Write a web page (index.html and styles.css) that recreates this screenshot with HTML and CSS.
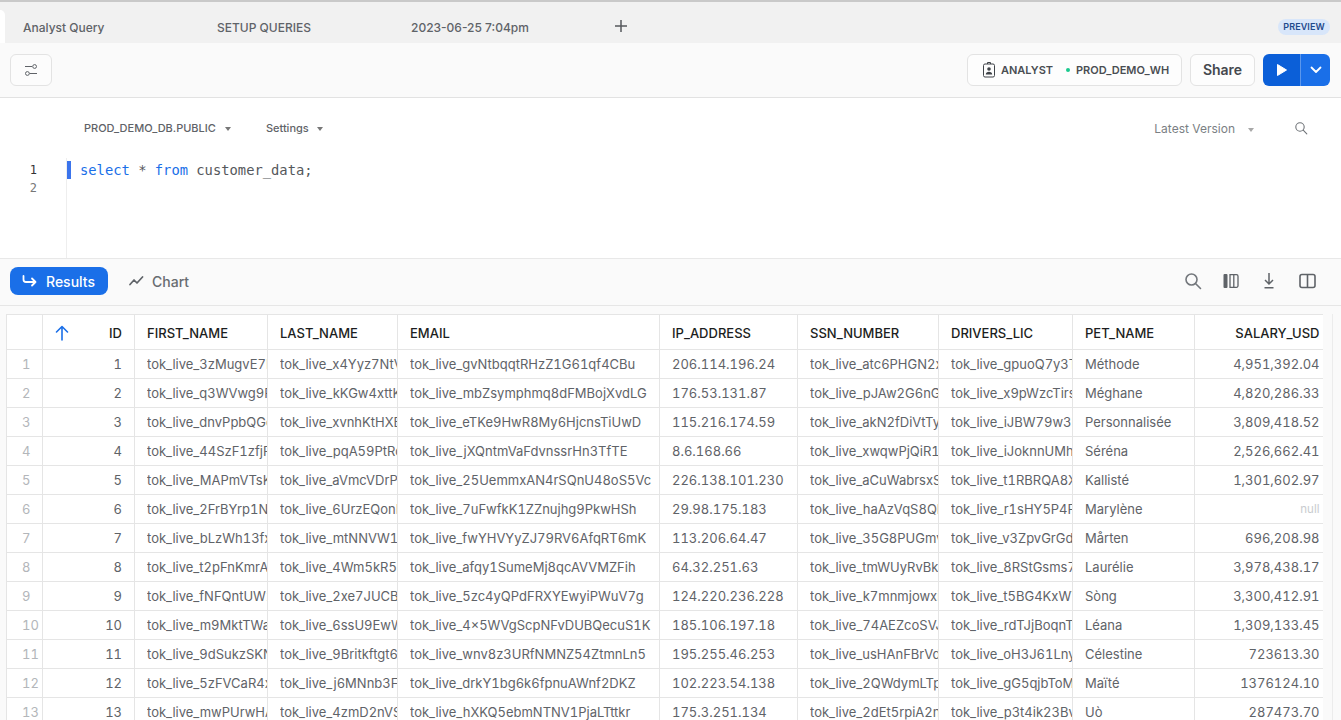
FILE: index.html
```html
<!DOCTYPE html>
<html lang="en">
<head>
<meta charset="utf-8">
<title>Analyst Query</title>
<link rel="stylesheet" href="styles.css">
</head>
<body>
<div class="tabs">
  <div class="active-tab"></div>
  <div class="tab tab-query">Analyst Query</div>
  <div class="tab tab-setup">SETUP QUERIES</div>
  <div class="tab tab-date">2023-06-25 7:04pm</div>
  <svg class="plus" width="14" height="14" viewBox="0 0 14 14"><path d="M7 1v12M1 7h12" stroke="#55585c" stroke-width="1.5" fill="none"/></svg>
  <span class="preview">PREVIEW</span>
</div>
<div class="toolbar">
  <button class="filter-btn"><svg width="12" height="12" viewBox="0 0 12 12" fill="none" stroke="#5f6368" stroke-width="1"><path d="M0 2.500h7M4.500 9.500h7.500"/><circle cx="9.600" cy="2.500" r="1.900"/><circle cx="2.400" cy="9.500" r="1.900"/></svg></button>
  <div class="spacer"></div>
  <div class="context">
    <svg width="14" height="18" viewBox="0 0 14 18" fill="none"><rect x="1.500" y="3" width="11" height="13" rx="1.500" stroke="#3f4348" stroke-width="1"/><path d="M5.500 3V1.500h3V3" stroke="#3f4348"/><circle cx="7" cy="8" r="1.800" fill="#3f4348"/><path d="M3.800 13.500c0-2 1.400-2.800 3.200-2.800s3.200.8 3.200 2.800z" fill="#3f4348"/></svg>
    <span class="role">ANALYST</span>
    <span class="dot"></span>
    <span>PROD_DEMO_WH</span>
  </div>
  <button class="share">Share</button>
  <div class="run">
    <span class="run-main"><svg width="12" height="14" viewBox="0 0 12 14"><path d="M1.500 1.500v11l9-5.500z" fill="#fff" stroke="#fff" stroke-linejoin="round"/></svg></span>
    <span class="run-more"><svg width="12" height="8" viewBox="0 0 12 8"><path d="M1.500 1.500L6 6l4.500-4.500" stroke="#fff" stroke-width="1.800" fill="none" stroke-linecap="round" stroke-linejoin="round"/></svg></span>
  </div>
</div>
<div class="editor">
  <div class="editor-bar">
    <span class="ctx-db">PROD_DEMO_DB.PUBLIC<i class="caret"></i></span>
    <span class="ctx-settings">Settings<i class="caret"></i></span>
    <span class="spacer"></span>
    <span class="version">Latest Version<i class="caret caret-light"></i></span>
    <svg class="editor-search" width="14" height="14" viewBox="0 0 14 14" fill="none" stroke="#6f7378" stroke-width="1.100"><circle cx="6" cy="6" r="4.200"/><path d="M9.200 9.200l3.600 3.600" stroke-linecap="round"/></svg>
  </div>
  <div class="code">
    <div class="gutter"><div class="ln ln-on">1</div><div class="ln">2</div></div>
    <div class="code-body">
      <div class="code-line"><i class="cursor"></i><span class="kw">select</span> * <span class="kw">from</span> customer_data;</div>
    </div>
  </div>
</div>
<div class="results-bar">
  <button class="results-btn"><svg width="16" height="12" viewBox="0 0 16 12" fill="none" stroke="#fff" stroke-width="1.800" stroke-linecap="round" stroke-linejoin="round"><path d="M1.500 1v3.500c0 1.500 1 2.500 2.500 2.500h9.500M10 3.500L13.500 7 10 10.500"/></svg>Results</button>
  <button class="chart-btn"><svg width="15" height="10" viewBox="0 0 15 10" fill="none" stroke="#5f6368" stroke-width="1.700" stroke-linecap="round" stroke-linejoin="round"><path d="M1 8.500l4-4.500 3 3 5.500-6"/></svg>Chart</button>
  <div class="spacer"></div>
  <div class="result-icons">
    <span class="icon-slot"><svg width="18" height="18" viewBox="0 0 18 18" fill="none" stroke="#73777c" stroke-width="1.600"><circle cx="7.500" cy="7.500" r="5.500"/><path d="M11.500 11.500l5 5" stroke-linecap="round"/></svg></span>
    <span class="icon-slot"><svg width="16" height="16" viewBox="0 0 16 16" fill="none" stroke="#5f6368" stroke-width="1.300"><rect x=".5" y="1" width="4" height="14" fill="#5f6368" stroke="none" rx="1"/><path d="M7 1.650h6.500a1.500 1.500 0 0 1 1.500 1.500v9.700a1.500 1.500 0 0 1-1.500 1.500H7zM10.800 1.650v12.700"/></svg></span>
    <span class="icon-slot"><svg width="14" height="18" viewBox="0 0 14 18" fill="none" stroke="#5f6368" stroke-width="1.500"><path d="M7 1v10M3 8l4 4 4-4M2.500 15.800h9"/></svg></span>
    <span class="icon-slot"><svg width="17" height="16" viewBox="0 0 17 16" fill="none" stroke="#5f6368" stroke-width="1.600"><rect x="1" y="1.500" width="15" height="13" rx="2"/><path d="M8.500 1.500v13"/></svg></span>
  </div>
</div>
<div class="grid-wrap">
<table class="grid">
<colgroup><col class="c-rn"><col class="c-id"><col class="c-fn"><col class="c-ln"><col class="c-em"><col class="c-ip"><col class="c-ssn"><col class="c-dl"><col class="c-pet"><col class="c-sal"></colgroup>
<thead><tr>
<th class="rn"></th>
<th class="num id-head"><svg class="sort" width="14" height="16" viewBox="0 0 14 16" fill="none" stroke="#1a6fe8" stroke-width="1.600" stroke-linecap="round" stroke-linejoin="round"><path d="M7 15V1.500M1.500 7L7 1.500 12.500 7"/></svg>ID</th>
<th>FIRST_NAME</th><th>LAST_NAME</th><th>EMAIL</th><th>IP_ADDRESS</th><th>SSN_NUMBER</th><th>DRIVERS_LIC</th><th>PET_NAME</th><th class="num">SALARY_USD</th>
</tr></thead>
<tbody>
<tr><td class="rn">1</td><td class="num">1</td><td><div>tok_live_3zMugvE7I</div></td><td><div>tok_live_x4Yyz7NtV</div></td><td><div>tok_live_gvNtbqqtRHzZ1G61qf4CBu</div></td><td><div>206.114.196.24</div></td><td><div>tok_live_atc6PHGN2x</div></td><td><div>tok_live_gpuoQ7y3T</div></td><td><div>Méthode</div></td><td class="num">4,951,392.04</td></tr>
<tr><td class="rn">2</td><td class="num">2</td><td><div>tok_live_q3WVwg9F</div></td><td><div>tok_live_kKGw4xttK</div></td><td><div>tok_live_mbZsymphmq8dFMBojXvdLG</div></td><td><div>176.53.131.87</div></td><td><div>tok_live_pJAw2G6nG</div></td><td><div>tok_live_x9pWzcTirs</div></td><td><div>Méghane</div></td><td class="num">4,820,286.33</td></tr>
<tr><td class="rn">3</td><td class="num">3</td><td><div>tok_live_dnvPpbQGc</div></td><td><div>tok_live_xvnhKtHXE</div></td><td><div>tok_live_eTKe9HwR8My6HjcnsTiUwD</div></td><td><div>115.216.174.59</div></td><td><div>tok_live_akN2fDiVtTy</div></td><td><div>tok_live_iJBW79w3I</div></td><td><div>Personnalisée</div></td><td class="num">3,809,418.52</td></tr>
<tr><td class="rn">4</td><td class="num">4</td><td><div>tok_live_44SzF1zfjF</div></td><td><div>tok_live_pqA59PtRc</div></td><td><div>tok_live_jXQntmVaFdvnssrHn3TfTE</div></td><td><div>8.6.168.66</div></td><td><div>tok_live_xwqwPjQiR1</div></td><td><div>tok_live_iJoknnUMh</div></td><td><div>Séréna</div></td><td class="num">2,526,662.41</td></tr>
<tr><td class="rn">5</td><td class="num">5</td><td><div>tok_live_MAPmVTsK</div></td><td><div>tok_live_aVmcVDrP</div></td><td><div>tok_live_25UemmxAN4rSQnU48oS5Vc</div></td><td><div>226.138.101.230</div></td><td><div>tok_live_aCuWabrsxS</div></td><td><div>tok_live_t1RBRQA8X</div></td><td><div>Kallisté</div></td><td class="num">1,301,602.97</td></tr>
<tr><td class="rn">6</td><td class="num">6</td><td><div>tok_live_2FrBYrp1N</div></td><td><div>tok_live_6UrzEQonI</div></td><td><div>tok_live_7uFwfkK1ZZnujhg9PkwHSh</div></td><td><div>29.98.175.183</div></td><td><div>tok_live_haAzVqS8QI</div></td><td><div>tok_live_r1sHY5P4F</div></td><td><div>Marylène</div></td><td class="num null">null</td></tr>
<tr><td class="rn">7</td><td class="num">7</td><td><div>tok_live_bLzWh13fx</div></td><td><div>tok_live_mtNNVW1</div></td><td><div>tok_live_fwYHVYyZJ79RV6AfqRT6mK</div></td><td><div>113.206.64.47</div></td><td><div>tok_live_35G8PUGmv</div></td><td><div>tok_live_v3ZpvGrGd</div></td><td><div>Mårten</div></td><td class="num">696,208.98</td></tr>
<tr><td class="rn">8</td><td class="num">8</td><td><div>tok_live_t2pFnKmrA</div></td><td><div>tok_live_4Wm5kR5z</div></td><td><div>tok_live_afqy1SumeMj8qcAVVMZFih</div></td><td><div>64.32.251.63</div></td><td><div>tok_live_tmWUyRvBk</div></td><td><div>tok_live_8RStGsms7</div></td><td><div>Laurélie</div></td><td class="num">3,978,438.17</td></tr>
<tr><td class="rn">9</td><td class="num">9</td><td><div>tok_live_fNFQntUW2</div></td><td><div>tok_live_2xe7JUCB</div></td><td><div>tok_live_5zc4yQPdFRXYEwyiPWuV7g</div></td><td><div>124.220.236.228</div></td><td><div>tok_live_k7mnmjowxi</div></td><td><div>tok_live_t5BG4KxWY</div></td><td><div>Sòng</div></td><td class="num">3,300,412.91</td></tr>
<tr><td class="rn">10</td><td class="num">10</td><td><div>tok_live_m9MktTWa</div></td><td><div>tok_live_6ssU9EwW</div></td><td><div>tok_live_4×5WVgScpNFvDUBQecuS1K</div></td><td><div>185.106.197.18</div></td><td><div>tok_live_74AEZcoSVJ</div></td><td><div>tok_live_rdTJjBoqnT</div></td><td><div>Léana</div></td><td class="num">1,309,133.45</td></tr>
<tr><td class="rn">11</td><td class="num">11</td><td><div>tok_live_9dSukzSKN</div></td><td><div>tok_live_9Britkftgt6</div></td><td><div>tok_live_wnv8z3URfNMNZ54ZtmnLn5</div></td><td><div>195.255.46.253</div></td><td><div>tok_live_usHAnFBrVd</div></td><td><div>tok_live_oH3J61Lny</div></td><td><div>Célestine</div></td><td class="num">723613.30</td></tr>
<tr><td class="rn">12</td><td class="num">12</td><td><div>tok_live_5zFVCaR4x</div></td><td><div>tok_live_j6MNnb3F</div></td><td><div>tok_live_drkY1bg6k6fpnuAWnf2DKZ</div></td><td><div>102.223.54.138</div></td><td><div>tok_live_2QWdymLTp</div></td><td><div>tok_live_gG5qjbToM</div></td><td><div>Maïté</div></td><td class="num">1376124.10</td></tr>
<tr><td class="rn">13</td><td class="num">13</td><td><div>tok_live_mwPUrwHA</div></td><td><div>tok_live_4zmD2nVS</div></td><td><div>tok_live_hXKQ5ebmNTNV1PjaLTttkr</div></td><td><div>175.3.251.134</div></td><td><div>tok_live_2dEt5rpiA2n</div></td><td><div>tok_live_p3t4ik23Bv</div></td><td><div>Uò</div></td><td class="num">287473.70</td></tr>
</tbody>
</table>
<div class="scroll-track"></div>
</div>
</body>
</html>
```
FILE: styles.css
```css
* { box-sizing: border-box; }
html, body { margin: 0; height: 720px; overflow: hidden; }
body { font-family: Inter, "Noto Sans", sans-serif; background: #fff; color: #5a5e63; display: flex; flex-direction: column; }
button { font-family: inherit; cursor: pointer; }
.spacer { flex: 1; }

.tabs { position: relative; height: 43px; flex: none; background: #f1f1f1; border-top: 2px solid #c9c9c9; font-size: 12px; color: #5f6368; display: flex; align-items: center; }
.active-tab { width: 5px; height: 33px; background: #fff; border-top-right-radius: 6px; flex: none; align-self: flex-end; }
.tab { font-weight: 500; flex: none; margin-top: 9px; }
.tab-query { width: 194px; margin-left: 18px; }
.tab-setup { width: 194px; }
.tab-date { width: 204px; }
.plus { flex: none; margin-top: 7px; margin-left: -1px; }
.preview { position: absolute; right: 11px; top: 17px; width: 52px; height: 16px; line-height: 16px; text-align: center; border-radius: 8px; background: #d8e6fa; color: #1f4a8c; font-size: 9px; font-weight: 600; letter-spacing: .1px; }

.toolbar { height: 55px; flex: none; background: #fafafa; border-bottom: 1px solid #e2e2e2; display: flex; align-items: center; padding: 0 11px 1px 10px; }
.filter-btn { width: 42px; height: 32px; border: 1px solid #e3e3e3; background: #fcfcfc; border-radius: 6px; display: flex; align-items: center; justify-content: center; padding: 0; }
.context { height: 32px; width: 215px; margin-right: 8px; border: 1px solid #e3e3e3; border-radius: 6px; background: #fdfdfd; display: flex; align-items: center; padding-left: 14px; font-size: 11px; font-weight: 600; color: #4a4d52; }
.role { margin-left: 5px; width: 65px; }
.dot { width: 4px; height: 4px; border-radius: 50%; background: #1bc98e; margin-right: 6px; flex: none; }
.share { width: 65px; height: 32px; margin-right: 8px; border: 1px solid #e3e3e3; border-radius: 6px; background: #fdfdfd; color: #45484d; font-size: 14px; font-weight: 600; padding: 0; }
.run { width: 67px; height: 32px; border-radius: 6px; overflow: hidden; display: flex; }
.run-main { width: 37px; background: #0b5fd8; display: flex; align-items: center; justify-content: center; }
.run-more { flex: 1; background: #1a6fe8; border-left: 1px solid #5c97ec; display: flex; align-items: center; justify-content: center; }

.editor { height: 161px; flex: none; border-bottom: 1px solid #e8e8e8; background: #fff; display: flex; flex-direction: column; }
.editor-bar { height: 60px; flex: none; display: flex; align-items: center; font-size: 11px; color: #5f6368; font-weight: 500; padding: 0 33px 0 84px; }
.ctx-settings { margin-left: 35px; }
.caret { display: inline-block; margin-left: 9px; width: 0; height: 0; border-left: 3.500px solid transparent; border-right: 3.500px solid transparent; border-top: 4px solid #777; vertical-align: 1px; }
.ctx-settings .caret { margin-left: 8px; }
.caret-light { margin-left: 13px; border-top-color: #a8a8a8; }
.version { font-size: 12px; font-weight: 400; color: #7b7f84; margin-right: 40px; }
.editor-search { flex: none; }
.code { flex: 1; display: flex; font-family: "DejaVu Sans Mono", monospace; font-size: 13.800px; }
.gutter { width: 67px; border-right: 1px solid #eeeeee; padding-top: 3px; flex: none; }
.ln { height: 18px; line-height: 18px; font-size: 12px; color: #777; text-align: right; padding-right: 29px; }
.ln-on { color: #333; }
.code-body { flex: 1; padding-top: 3px; }
.code-line { position: relative; height: 18px; line-height: 18px; padding-left: 13px; color: #55585c; }
.cursor { position: absolute; left: 0; top: 0; width: 4px; height: 18px; background: #3b74ec; }
.kw { color: #1a6fe8; }

.results-bar { height: 47px; flex: none; background: #fafafa; border-bottom: 1px solid #e6e6e6; display: flex; align-items: center; padding: 0 15px 2px 10px; }
.results-btn { width: 98px; height: 28px; border: 0; border-radius: 8px; background: #1a6fe8; color: #fff; font-size: 14px; font-weight: 500; display: flex; align-items: center; justify-content: center; gap: 8px; padding: 0 1px 0 0; }
.chart-btn { margin-left: 21px; border: 0; background: none; color: #686c71; font-size: 14px; font-weight: 500; display: flex; align-items: center; gap: 8px; padding: 0; }
.result-icons { display: flex; align-items: center; }
.icon-slot { width: 38px; display: flex; align-items: center; justify-content: center; }

.grid-wrap { position: relative; flex: 1; overflow: hidden; background: #fafafa; padding: 8px 0 0 6px; }
.grid { width: 1316px; table-layout: fixed; border-collapse: collapse; background: #fff; font-size: 13px; font-variant-numeric: tabular-nums; }
.c-rn { width: 36px; } .c-id { width: 92px; } .c-fn { width: 133px; } .c-ln { width: 130px; } .c-em { width: 262px; }
.c-ip { width: 138px; } .c-ssn { width: 141px; } .c-dl { width: 134px; } .c-pet { width: 122px; } .c-sal { width: 128px; }
.grid th, .grid td { padding: 0 0 0 12px; border: 1px solid #e5e5e5; text-align: left; white-space: nowrap; overflow: hidden; }
.grid th { height: 35px; padding-top: 2px; color: #1c1e21; font-weight: 500; }
.grid td { height: 29px; color: #5f6368; }
.grid td div { overflow: hidden; }
.grid .num { text-align: right; padding-left: 0; padding-right: 3px; }
.grid td.num:nth-child(2), .grid th.id-head { padding-right: 12px; }
.grid .rn { color: #b3b6ba; padding-left: 15px; border-left: 1px solid #e5e5e5; }
.grid .null { color: #c9cccf; font-size: 11.500px; }
.grid tr > :last-child { border-right: 0; }
.id-head { position: relative; }
.sort { position: absolute; left: 12px; top: 10px; }
.scroll-track { position: absolute; top: 8px; bottom: 0; right: 0; width: 9px; background: #fafafa; border-left: 1px solid #ececec; }
```
